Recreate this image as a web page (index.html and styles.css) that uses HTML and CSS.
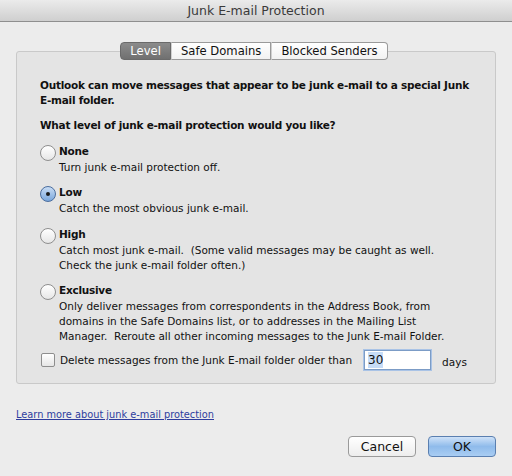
FILE: index.html
```html
<!DOCTYPE html>
<html lang="en">
<head>
<meta charset="UTF-8">
<title>Junk E-mail Protection</title>
<link rel="stylesheet" href="styles.css">
</head>
<body>
<div class="window">
    <div class="titlebar">Junk E-mail Protection</div>

    <div class="content">
        <div class="tabs">
            <span class="tab active">Level</span>
            <span class="tab">Safe Domains</span>
            <span class="tab">Blocked Senders</span>
        </div>

        <div class="group">
            <p class="intro">Outlook can move messages that appear to be junk e-mail to a special Junk<br>E-mail folder.</p>
            <p class="question">What level of junk e-mail protection would you like?</p>

            <div class="option">
                <span class="radio"></span>
                <div class="option-text">
                    <div class="option-title">None</div>
                    <div class="option-desc">Turn junk e-mail protection off.</div>
                </div>
            </div>
            <div class="option">
                <span class="radio checked"></span>
                <div class="option-text">
                    <div class="option-title">Low</div>
                    <div class="option-desc">Catch the most obvious junk e-mail.</div>
                </div>
            </div>
            <div class="option">
                <span class="radio"></span>
                <div class="option-text">
                    <div class="option-title">High</div>
                    <div class="option-desc">Catch most junk e-mail.&nbsp; (Some valid messages may be caught as well.<br>Check the junk e-mail folder often.)</div>
                </div>
            </div>
            <div class="option">
                <span class="radio"></span>
                <div class="option-text">
                    <div class="option-title">Exclusive</div>
                    <div class="option-desc">Only deliver messages from correspondents in the Address Book, from<br>domains in the Safe Domains list, or to addresses in the Mailing List<br>Manager.&nbsp; Reroute all other incoming messages to the Junk E-mail Folder.</div>
                </div>
            </div>

            <div class="delete-row">
                <span class="checkbox"></span>
                <span class="delete-label">Delete messages from the Junk E-mail folder older than</span>
                <span class="days-input"><span class="selected">30</span></span>
                <span class="days">days</span>
            </div>
        </div>

        <a class="learn" href="#">Learn more about junk e-mail protection</a>

        <div class="buttons">
            <span class="btn">Cancel</span>
            <span class="btn default">OK</span>
        </div>
    </div>
</div>
</body>
</html>
```

FILE: styles.css
```css
body {
    margin: 0;
    padding: 0;
    font-family: "DejaVu Sans", sans-serif;
    font-size: 10.5px;
    color: #111;
}

.window {
    width: 512px;
    height: 476px;
    background: #ececec;
}

.titlebar {
    height: 21px;
    line-height: 22px;
    text-align: center;
    font-size: 12.5px;
    color: #3a3a3a;
    background: linear-gradient(#ebebeb, #cfcfcf);
    border-bottom: 1px solid #8f8f8f;
}

.content {
    padding: 20px 16px 0 16px;
}

.tabs {
    display: flex;
    justify-content: center;
    position: relative;
    z-index: 1;
    margin-left: -4px;
}

.tabs .tab {
    height: 16px;
    line-height: 16px;
    padding: 0 9px;
    font-size: 11.6px;
    background: linear-gradient(#ffffff, #f2f2f2);
    border: 1px solid #9a9a9a;
    border-left: 1px solid #d0d0d0;
}

.tabs .tab:first-child {
    border-left: 1px solid #8a8a8a;
    border-radius: 4px 0 0 4px;
}

.tabs .tab:last-child {
    border-radius: 0 4px 4px 0;
}

.tabs .tab.active {
    color: #fff;
    background: linear-gradient(#8b8b8b, #707070);
    border-color: #6a6a6a;
}

.group {
    margin-top: -9px;
    height: 333px;
    padding: 0 0 0 23px;
    background: #e4e4e4;
    border: 1px solid #c9c9c9;
    border-radius: 3px;
    box-sizing: border-box;
    width: 480px;
}

.intro,
.question,
.option-title {
    font-weight: bold;
    font-size: 10.5px;
    letter-spacing: -0.25px;
    line-height: 15px;
}

.intro {
    margin: 26px 0 0 0;
}

.question {
    margin: 10px 0 0 0;
}

.option {
    display: flex;
    margin-top: 11px;
}

.option + .option {
    margin-top: 10px;
}

.option:nth-child(5) {
    margin-top: 11px;
}

.radio {
    width: 14px;
    height: 14px;
    border-radius: 50%;
    border: 1px solid #8e8e8e;
    background: linear-gradient(#ffffff, #e6e6e6);
    margin-top: 1px;
    margin-right: 3px;
    flex: none;
    position: relative;
}

.radio.checked {
    border-color: #4a6d9e;
    background: linear-gradient(#c9ddf5, #7aa7dc);
}

.radio.checked::after {
    content: "";
    position: absolute;
    left: 5px;
    top: 5px;
    width: 4px;
    height: 4px;
    border-radius: 50%;
    background: #1a1a1a;
}

.option-desc {
    margin-top: 1px;
    line-height: 15px;
}

.delete-row {
    display: flex;
    align-items: center;
    margin-top: 6px;
}

.checkbox {
    width: 12px;
    height: 12px;
    border: 1px solid #8e8e8e;
    border-radius: 2px;
    background: linear-gradient(#ffffff, #e6e6e6);
    margin: 0 5px 0 1px;
    flex: none;
}

.delete-label {
    white-space: nowrap;
    margin-right: 12px;
}

.days-input {
    width: 62px;
    height: 18px;
    line-height: 18px;
    padding-left: 3px;
    font-size: 12px;
    background: #fff;
    border: 1px solid #7c9cc6;
    box-shadow: 0 0 0 1px #a9c3e6;
    flex: none;
}

.days-input .selected {
    background: #c6dcf7;
    padding: 1px 0;
}

.days {
    margin-left: 11px;
    margin-top: 4px;
}

.learn {
    display: block;
    margin-top: 25px;
    font-size: 9.8px;
    color: #2e3d9e;
    text-decoration: underline;
    width: max-content;
}

.buttons {
    display: flex;
    justify-content: flex-end;
    gap: 12px;
    margin-top: 16px;
}

.btn {
    width: 66px;
    height: 19px;
    line-height: 19px;
    text-align: center;
    font-size: 12.5px;
    border: 1px solid #9a9a9a;
    border-radius: 4px;
    background: linear-gradient(#ffffff, #ededed);
}

.btn.default {
    border-color: #5a7fb0;
    background: linear-gradient(#cfe2f8, #8fbbeb 50%, #a9cdf3);
}
```
